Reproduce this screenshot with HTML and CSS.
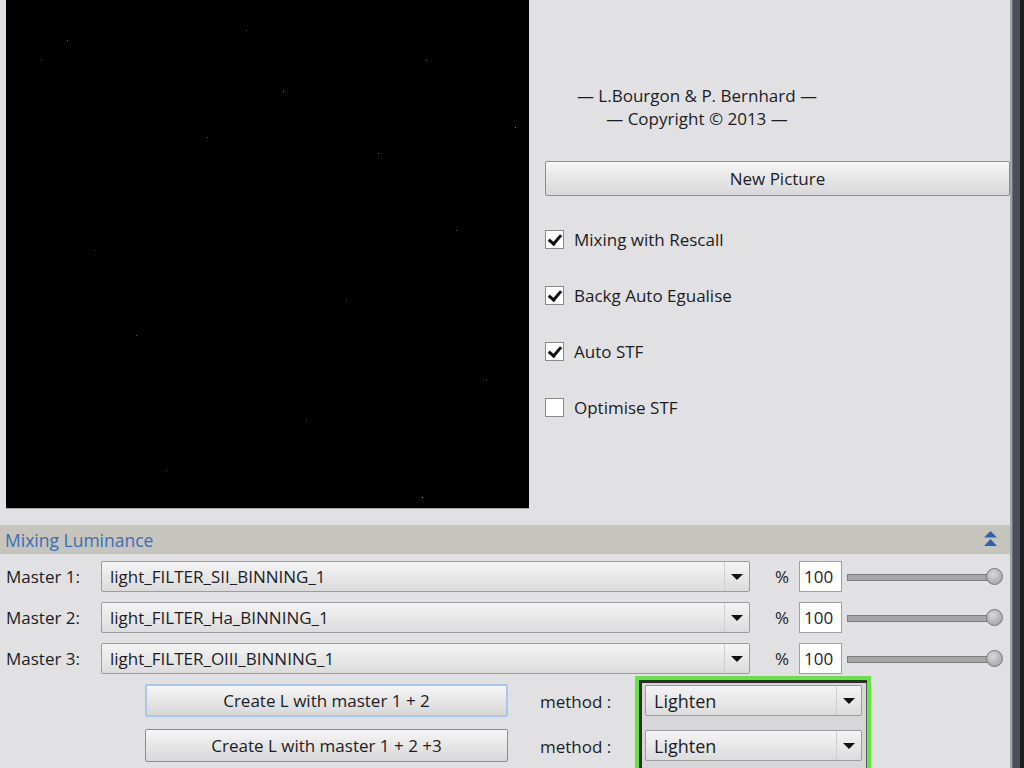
FILE: index.html
```html
<!DOCTYPE html>
<html>
<head>
<meta charset="utf-8">
<title>Mixing Luminance</title>
<link rel="stylesheet" href="styles.css">
</head>
<body>
<div class="app">
  <div class="main">
    <div class="top">
      <div class="preview"><div class="stars"></div></div>
      <div class="side">
        <div class="credits">
          <div>— L.Bourgon &amp; P. Bernhard —</div>
          <div>— Copyright © 2013 —</div>
        </div>
        <button class="btn wide">New Picture</button>
        <div class="checks">
          <label class="check"><span class="box on"></span>Mixing with Rescall</label>
          <label class="check"><span class="box on"></span>Backg Auto Egualise</label>
          <label class="check"><span class="box on"></span>Auto STF</label>
          <label class="check"><span class="box"></span>Optimise STF</label>
        </div>
      </div>
    </div>
    <div class="section-head">
      <span class="section-title">Mixing Luminance</span>
      <svg class="collapse" width="15" height="17" viewBox="0 0 15 17"><polygon points="7.5,0 14,6.5 1,6.5" fill="#2c62b4"/><polygon points="7.5,8 14,15 1,15" fill="#2c62b4"/></svg>
    </div>
    <div class="rows">
      <div class="row">
        <span class="lbl">Master 1:</span>
        <div class="combo master"><span class="val">light_FILTER_SII_BINNING_1</span><span class="arrow"></span></div>
        <span class="pct">%</span>
        <span class="num">100</span>
        <div class="slider"><div class="track"></div><div class="knob"></div></div>
      </div>
      <div class="row">
        <span class="lbl">Master 2:</span>
        <div class="combo master"><span class="val">light_FILTER_Ha_BINNING_1</span><span class="arrow"></span></div>
        <span class="pct">%</span>
        <span class="num">100</span>
        <div class="slider"><div class="track"></div><div class="knob"></div></div>
      </div>
      <div class="row">
        <span class="lbl">Master 3:</span>
        <div class="combo master"><span class="val">light_FILTER_OIII_BINNING_1</span><span class="arrow"></span></div>
        <span class="pct">%</span>
        <span class="num">100</span>
        <div class="slider"><div class="track"></div><div class="knob"></div></div>
      </div>
    </div>
    <div class="create">
      <div class="create-btns">
        <button class="btn create-btn focus">Create L with master 1 + 2</button>
        <button class="btn create-btn">Create L with master 1 + 2 +3</button>
      </div>
      <div class="methods">
        <span>method :</span>
        <span>method :</span>
      </div>
      <div class="highlight">
        <div class="combo method"><span class="val">Lighten</span><span class="arrow"></span></div>
        <div class="combo method"><span class="val">Lighten</span><span class="arrow"></span></div>
      </div>
    </div>
  </div>
  <div class="edge"></div>
</div>
</body>
</html>
```

FILE: styles.css
```css
* { box-sizing: border-box; }
html, body { margin: 0; padding: 0; }
body {
  width: 1024px;
  height: 768px;
  overflow: hidden;
  background: #e1e1e3;
  font-family: "Open Sans", "Noto Sans", sans-serif;
  font-size: 17px;
  color: #1c1c26;
}
.app { display: flex; height: 768px; }
.main { width: 1010px; display: flex; flex-direction: column; }
.main > * { flex-shrink: 0; }
.edge {
  width: 14px;
  background: linear-gradient(to right, #a2a4a8 0, #a2a4a8 2px, #6c7078 2px, #6c7078 3px, #4a4f5a 3px, #4a4f5a 10px, #1b1c1e 10px);
}

/* top */
.top { display: flex; height: 525px; }
.preview {
  position: relative;
  margin-left: 6px;
  width: 523px;
  height: 509px;
  background: #000;
  border-bottom: 1px solid #a8a8a8;
}
.stars {
  position: absolute;
  left: 0; top: 0;
  width: 1px; height: 1px;
  box-shadow: 61px 40px 0 #666, 277px 91px 0 #777, 509px 127px 0 #888, 372px 153px 0 #666,
    201px 137px 0 #555, 416px 497px 0 #999, 130px 335px 0 #555, 35px 60px 0 #444,
    450px 230px 0 #555, 300px 420px 0 #444, 88px 250px 0 #444, 240px 30px 0 #555,
    480px 380px 0 #555, 160px 470px 0 #444, 340px 300px 0 #444, 420px 60px 0 #555;
}
.side { margin-left: 16px; width: 465px; display: flex; flex-direction: column; }
.credits {
  margin-top: 84px;
  margin-left: 22px;
  width: 260px;
  text-align: center;
  line-height: 23px;
}
.btn {
  font-family: inherit;
  font-size: 17px;
  color: #1c1c26;
  background: linear-gradient(#f6f6f6, #e6e6e6 50%, #d8d8d8);
  border: 1px solid #8e8e8e;
  border-radius: 2px;
  padding: 0;
}
.wide { margin-top: 31px; height: 35px; width: 465px; }
.checks { margin-top: 29px; display: flex; flex-direction: column; gap: 28px; }
.check { display: flex; align-items: center; height: 28px; gap: 10px; }
.box {
  width: 19px; height: 19px;
  background: #fff;
  border: 1px solid #8a8a8a;
  position: relative;
}
.box.on::after {
  content: "";
  position: absolute;
  left: 5px; top: 1px;
  width: 5px; height: 10px;
  border: solid #111;
  border-width: 0 3px 3px 0;
  transform: rotate(40deg);
}

/* section header */
.section-head {
  height: 29px;
  background: #c5c5be;
  display: flex;
  align-items: center;
  justify-content: space-between;
  padding: 0 12px 0 5px;
}
.section-title { color: #3b6db5; font-size: 17.5px; }

/* master rows */
.rows { padding-top: 7px; display: flex; flex-direction: column; gap: 10px; }
.row { display: flex; align-items: center; height: 31px; }
.lbl { width: 95px; margin-left: 6px; }
.combo {
  display: flex;
  align-items: center;
  height: 31px;
  background: linear-gradient(#f4f4f4, #e8e8e8 50%, #dcdcdc);
  border: 1px solid #9c9c9c;
  border-radius: 2px;
}
.combo .val { flex: 1; padding-left: 8px; }
.combo .arrow {
  width: 25px;
  height: 100%;
  border-left: 1px solid #cfcfcf;
  position: relative;
}
.combo .arrow::after {
  content: "";
  position: absolute;
  left: 6px; top: 12px;
  border-left: 6px solid transparent;
  border-right: 6px solid transparent;
  border-top: 6px solid #111;
}
.master { width: 649px; }
.pct { margin-left: 25px; width: 24px; }
.num {
  width: 43px;
  height: 31px;
  background: #fff;
  border: 1px solid #a0a0a0;
  padding-left: 4px;
  line-height: 29px;
}
.slider { position: relative; width: 156px; height: 18px; margin-left: 5px; }
.track {
  position: absolute;
  left: 0; top: 6px;
  width: 148px; height: 7px;
  background: #a6a6a6;
  border: 1px solid #7e7e7e;
}
.knob {
  position: absolute;
  right: 0; top: 0;
  width: 17px; height: 17px;
  border-radius: 50%;
  background: radial-gradient(circle at 40% 35%, #d8d8d8, #9a9a9a);
  border: 1px solid #777;
}

/* create rows */
.create { display: flex; margin-top: 10px; }
.create-btns {
  margin-left: 145px;
  display: flex;
  flex-direction: column;
  gap: 12px;
}
.create-btn { width: 363px; height: 33px; }
.create-btn.focus { border: 2px solid #a9c7ee; }
.methods {
  width: 90px;
  margin-left: 32px;
  display: flex;
  flex-direction: column;
  gap: 12px;
}
.methods span { height: 33px; line-height: 35px; }
.highlight {
  margin-top: -8px;
  margin-left: 5px;
  width: 236px;
  height: 100px;
  border: 4px solid #66e444;
  box-shadow: inset 3px 3px 0 #2e2e2e, inset -1px 0 0 #5a5a5a;
  padding: 5px 5px 0 6px;
  display: flex;
  flex-direction: column;
  gap: 14px;
  background: #d7d7d9;
}
.method { width: 217px; }
.method .val { font-size: 18px; }
```
